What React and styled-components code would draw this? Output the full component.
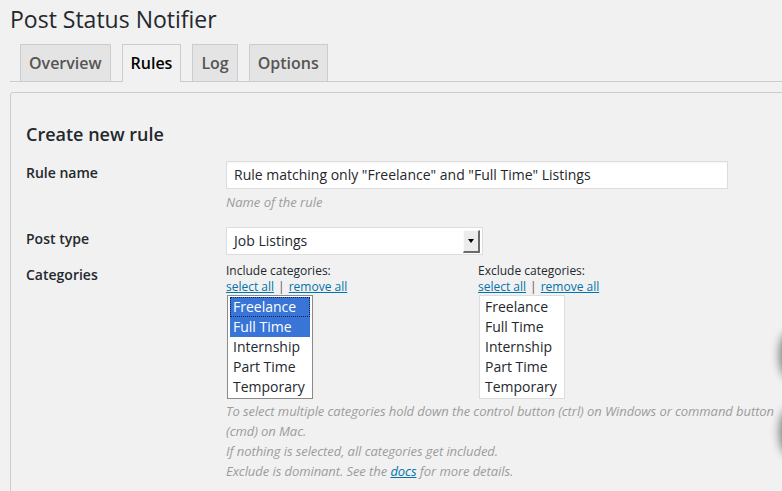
import React from 'react';
import styled, { createGlobalStyle } from 'styled-components';

const GlobalStyle = createGlobalStyle`
    html, body {
        margin: 0;
        padding: 0;
        background: #f1f1f1;
        overflow: hidden;
    }
    body {
        font-family: "Open Sans", "Liberation Sans", sans-serif;
        color: #23282d;
    }
`

const Page = styled.div`
    position: relative;
    width: 782px;
    height: 491px;
    padding: 5px 0 0 10px;
    box-sizing: border-box;
    overflow: hidden;
`

const Title = styled.h1`
    margin: 0;
    font-size: 23px;
    line-height: 29px;
    font-weight: 400;
    color: #23282d;
`

const Tabs = styled.nav`
    display: flex;
    gap: 11px;
    margin-top: 10px;
    padding-left: 10px;
    border-bottom: 1px solid #ccc;
`

const Tab = styled.a`
    display: block;
    line-height: 36px;
    padding: 0 8px;
    font-size: 16px;
    font-weight: 600;
    text-decoration: none;
    border: 1px solid #ccc;
    border-bottom: none;
    margin-bottom: ${p => (p.$active ? '-1px' : '0')};
    background: ${p => (p.$active ? '#f1f1f1' : '#e4e4e4')};
    color: ${p => (p.$active ? '#000' : '#555')};
    height: ${p => (p.$active ? '37px' : '36px')};
`

const Panel = styled.section`
    margin-top: 10px;
    margin-right: -20px;
    border: 1px solid #ccc;
    border-radius: 3px;
    padding: 0 15px 20px;
    height: 420px;
`

const Heading = styled.h3`
    margin: 29px 0 15px;
    font-size: 18px;
    line-height: 24px;
    font-weight: 600;
    color: #23282d;
`

const Row = styled.div`
    display: grid;
    grid-template-columns: 200px 1fr;
    margin-bottom: ${p => p.$gap || 0}px;
`

const Label = styled.div`
    font-size: 14px;
    line-height: 20px;
    font-weight: 600;
    padding-top: ${p => p.$top || 0}px;
    color: #23282d;
`

const TextInput = styled.div`
    width: 502px;
    height: 28px;
    box-sizing: border-box;
    border: 1px solid #ddd;
    background: #fff;
    box-shadow: inset 0 1px 2px rgba(0, 0, 0, 0.04);
    padding-left: 7px;
    font-size: 14px;
    line-height: 26px;
    color: #23282d;
    white-space: nowrap;
`

const Hint = styled.p`
    margin: ${p => p.$top || 0}px 0 0;
    font-size: 13px;
    line-height: 20px;
    font-style: italic;
    color: #9c9c9c;
    white-space: nowrap;
    letter-spacing: ${p => p.$tight ? '-0.07px' : 'normal'};
`

const Select = styled.div`
    display: flex;
    align-items: center;
    width: 257px;
    height: 28px;
    box-sizing: border-box;
    border: 1px solid #ddd;
    background: #fff;
    padding: 2px 2px 2px 7px;
    font-size: 14px;
    color: #23282d;
`

const SelectText = styled.span`
    flex: 1;
    margin-top: -2px;
`

const SelectButton = styled.span`
    display: flex;
    align-items: center;
    justify-content: center;
    width: 14px;
    height: 20px;
    background: #ececec;
    border-right: 2px solid #6a6a6a;
    border-bottom: 2px solid #6a6a6a;
    border-top: 1px solid #fafafa;
    border-left: 1px solid #fafafa;
    &::after {
        content: "";
        border-left: 3px solid transparent;
        border-right: 3px solid transparent;
        border-top: 4px solid #000;
    }
`

const Columns = styled.div`
    display: grid;
    grid-template-columns: 252px 252px;
    padding-top: 8px;
`

const SmallText = styled.div`
    font-size: 12px;
    line-height: 16px;
    color: #23282d;
    white-space: nowrap;
`

const Link = styled.a`
    color: #0073aa;
    text-decoration: underline;
`

const Sep = styled.span`
    color: #555;
    margin: 0 4px;
`

const ListBox = styled.ul`
    list-style: none;
    margin: 0 0 0 1px;
    padding: 1px 2px;
    width: 86px;
    box-sizing: border-box;
    background: #fff;
    border: 1px solid ${p => (p.$focused ? '#8a8a8a' : '#ddd')};
`

const Option = styled.li`
    height: 20px;
    line-height: 20px;
    padding-left: 3px;
    font-size: 14px;
    box-sizing: border-box;
    white-space: nowrap;
    background: ${p => (p.$selected ? '#3875d7' : 'transparent')};
    color: ${p => (p.$selected ? '#fff' : '#23282d')};
    outline: ${p => (p.$focus ? '1px dotted #0c1f60' : 'none')};
    outline-offset: -1px;
`

const Blur = styled.div`
    position: absolute;
    right: -14px;
    top: ${p => p.$top}px;
    width: 14px;
    height: ${p => p.$h}px;
    border-radius: 50%;
    box-shadow: 0 0 8px 3px rgba(0, 0, 0, 0.45);
    background: rgba(0, 0, 0, 0.5);
`

const categories = ['Freelance', 'Full Time', 'Internship', 'Part Time', 'Temporary'];

const CategoryColumn = ({ title, selected = [], focused }) => (
    <div>
        <SmallText>{title}</SmallText>
        <SmallText>
            <Link>select all</Link>
            <Sep>|</Sep>
            <Link>remove all</Link>
        </SmallText>
        <ListBox $focused={focused}>
            {categories.map((c, i) => (
                <Option key={c} $selected={selected.includes(c)} $focus={focused && i === 0}>
                    {c}
                </Option>
            ))}
        </ListBox>
    </div>
)

const App = () => {
    return (
        <>
            <GlobalStyle />
            <Page>
                <Title>Post Status Notifier</Title>
                <Tabs>
                    <Tab>Overview</Tab>
                    <Tab $active>Rules</Tab>
                    <Tab>Log</Tab>
                    <Tab>Options</Tab>
                </Tabs>
                <Panel>
                    <Heading>Create new rule</Heading>
                    <Row $gap={15}>
                        <Label $top={2}>Rule name</Label>
                        <div>
                            <TextInput>Rule matching only "Freelance" and "Full Time" Listings</TextInput>
                            <Hint $top={3}>Name of the rule</Hint>
                        </div>
                    </Row>
                    <Row>
                        <Label $top={2}>Post type</Label>
                        <Select>
                            <SelectText>Job Listings</SelectText>
                            <SelectButton />
                        </Select>
                    </Row>
                    <Row>
                        <Label $top={10}>Categories</Label>
                        <div>
                            <Columns>
                                <CategoryColumn
                                    title="Include categories:"
                                    selected={['Freelance', 'Full Time']}
                                    focused
                                />
                                <CategoryColumn title="Exclude categories:" />
                            </Columns>
                            <Hint $top={2} $tight>
                                To select multiple categories hold down the control button (ctrl) on Windows or command button
                                <br />
                                (cmd) on Mac.
                                <br />
                                If nothing is selected, all categories get included.
                                <br />
                                Exclude is dominant. See the <Link>docs</Link> for more details.
                            </Hint>
                        </div>
                    </Row>
                </Panel>
                <Blur $top={335} $h={40} />
                <Blur $top={412} $h={40} />
            </Page>
        </>
    )
}

export default App;
